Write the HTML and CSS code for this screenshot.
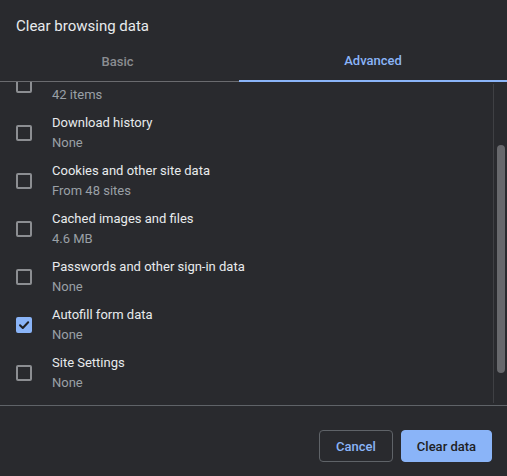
FILE: index.html
```html
<!DOCTYPE html>
<html lang="en">
<head>
<meta charset="utf-8">
<title>Clear browsing data</title>
<link rel="stylesheet" href="styles.css">
</head>
<body>
<div class="dialog">
  <div class="header">
    <div class="title">Clear browsing data</div>
    <div class="tabs">
      <div class="tab tab-basic">Basic</div>
      <div class="tab tab-active">Advanced</div>
    </div>
  </div>
  <div class="scroll-wrap">
    <div class="scroll" id="scroller">
      <div class="time-range"></div>
      <div class="row"><span class="box"></span><div class="text"><div class="label label-hidden"></div><div class="sub">42 items</div></div></div>
      <div class="row"><span class="box"></span><div class="text"><div class="label">Download history</div><div class="sub">None</div></div></div>
      <div class="row"><span class="box"></span><div class="text"><div class="label">Cookies and other site data</div><div class="sub">From 48 sites</div></div></div>
      <div class="row"><span class="box"></span><div class="text"><div class="label">Cached images and files</div><div class="sub">4.6 MB</div></div></div>
      <div class="row"><span class="box"></span><div class="text"><div class="label">Passwords and other sign-in data</div><div class="sub">None</div></div></div>
      <div class="row"><span class="box box-checked"><svg width="16" height="16" viewBox="0 0 16 16"><path d="M4 8.2 L6.8 11 L12.2 5.2" fill="none" stroke="#202124" stroke-width="2" stroke-linecap="round" stroke-linejoin="round"/></svg></span><div class="text"><div class="label">Autofill form data</div><div class="sub">None</div></div></div>
      <div class="row"><span class="box"></span><div class="text"><div class="label">Site Settings</div><div class="sub">None</div></div></div>
      <div class="row"><span class="box"></span><div class="text"><div class="label">Hosted app data</div><div class="sub">1 app (Web Store)</div></div></div>
    </div>
    <div class="sb-track"></div>
    <div class="sb-thumb"></div>
  </div>
  <div class="footer">
    <button class="btn btn-cancel">Cancel</button>
    <button class="btn btn-primary">Clear data</button>
  </div>
</div>
<script src="script.js"></script>
</body>
</html>
```

FILE: styles.css
```css
html, body {
  margin: 0;
  padding: 0;
  background: #292a2e;
}
body {
  font-family: Roboto, "Liberation Sans", sans-serif;
  color: #e8eaed;
  width: 507px;
  height: 476px;
  overflow: hidden;
}
.dialog {
  display: flex;
  flex-direction: column;
  height: 476px;
}
.header {
  flex: none;
}
.title {
  padding: 16px 16px 0;
  height: 25px;
  line-height: 20px;
  font-size: 15px;
  color: #e8eaed;
}
.tabs {
  display: grid;
  grid-template-columns: 239px 1fr;
  height: 40px;
  border-bottom: 1px solid #6a6b6f;
}
.tab {
  height: 41px;
  margin-bottom: -1px;
  box-sizing: border-box;
  display: flex;
  align-items: center;
  justify-content: center;
  font-size: 13px;
  font-weight: 500;
  color: #8b8d91;
}
.tab-basic {
  padding-right: 4px;
}
.tab-active {
  color: #8ab4f8;
  border-bottom: 2px solid #8ab4f8;
}
.scroll-wrap {
  flex: none;
  height: 323px;
  position: relative;
}
.scroll {
  height: 323px;
  overflow: hidden;
}
.sb-track {
  position: absolute;
  left: 493px;
  top: 2px;
  bottom: 2px;
  width: 1px;
  background: #3f4044;
}
.sb-thumb {
  position: absolute;
  left: 497px;
  top: 63px;
  width: 8px;
  height: 228px;
  border-radius: 4px;
  background: #67686c;
}
.time-range {
  height: 68px;
}
.row {
  display: flex;
  align-items: center;
  height: 48px;
  padding: 0 16px;
}
.box {
  flex: none;
  width: 16px;
  height: 16px;
  box-sizing: border-box;
  border: 2px solid #8c8e92;
  border-radius: 2px;
  margin-right: 20px;
  position: relative;
}
.box-checked {
  background: #8ab4f8;
  border-color: #8ab4f8;
}
.box-checked svg {
  position: absolute;
  left: -2px;
  top: -2px;
}
.text {
  display: flex;
  flex-direction: column;
}
.label {
  font-size: 13px;
  line-height: 20px;
  color: #e8eaed;
}
.label-hidden {
  height: 20px;
}
.sub {
  font-size: 13px;
  line-height: 20px;
  color: #9aa0a6;
}
.footer {
  flex: 1;
  border-top: 1px solid #5f6368;
  display: flex;
  justify-content: flex-end;
  align-items: flex-start;
  gap: 8px;
  padding: 24px 15px 0;
}
.btn {
  height: 32px;
  box-sizing: border-box;
  border-radius: 4px;
  font-family: Roboto, "Liberation Sans", sans-serif;
  font-size: 13px;
  font-weight: 500;
  padding: 0;
  white-space: nowrap;
  cursor: pointer;
}
.btn-cancel {
  background: transparent;
  border: 1px solid #5f6368;
  color: #8ab4f8;
  width: 74px;
}
.btn-primary {
  background: #8ab4f8;
  border: 1px solid #8ab4f8;
  color: #202124;
  width: 91px;
}
```

FILE: script.js
```js
document.getElementById('scroller').scrollTop = 89;
```
